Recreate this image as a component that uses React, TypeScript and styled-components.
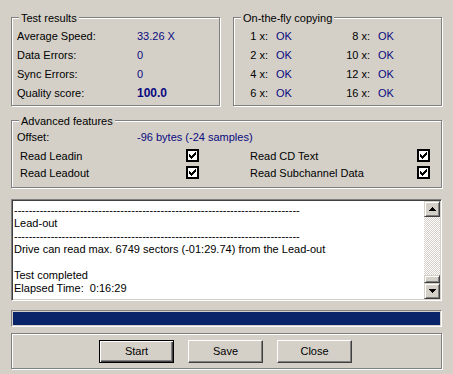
import { Fragment } from 'react';
import styled, { createGlobalStyle, css } from 'styled-components';

const GlobalStyle = createGlobalStyle`
  html, body {
    margin: 0;
    padding: 0;
    background: #d4d0c8;
  }
  body {
    font-family: "Liberation Sans", Arial, sans-serif;
    font-size: 11px;
    color: #000;
  }
`;

const Window = styled.div`
  width: 453px;
  height: 374px;
  box-sizing: border-box;
  padding: 17px 11px 0 11px;
  display: flex;
  flex-direction: column;
  background: #d4d0c8;
`;

const etched = css`
  border: 1px solid #808080;
  box-shadow: 1px 1px 0 #fff, inset 1px 1px 0 #fff;
`;

const TopRow = styled.div`
  display: grid;
  grid-template-columns: 209px 209px;
  column-gap: 13px;
`;

const Group = styled.div<{ $height: number }>`
  position: relative;
  box-sizing: border-box;
  height: ${({ $height }) => $height}px;
  ${etched};
`;

const Legend = styled.span`
  position: absolute;
  top: -6px;
  left: 7px;
  padding: 0 2px;
  line-height: 13px;
  background: #d4d0c8;
`;

const ResultsGrid = styled.div`
  display: grid;
  grid-template-columns: 120px 1fr;
  grid-auto-rows: 19px;
  align-items: center;
  padding: 8px 0 0 5px;
`;

const Value = styled.span<{ $bold?: boolean }>`
  color: #0a0a80;
  font-weight: ${({ $bold }) => ($bold ? 700 : 400)};
  font-size: ${({ $bold }) => ($bold ? '12px' : '11px')};
`;

const CopyGrid = styled.div`
  display: grid;
  grid-template-columns: 34px 68px 34px 1fr;
  grid-auto-rows: 19px;
  align-items: center;
  padding-top: 8px;
`;

const Speed = styled.span`
  text-align: right;
`;

const Ok = styled(Value)`
  padding-left: 8px;
`;

const Advanced = styled(Group)`
  margin-top: 14px;
`;

const OffsetRow = styled.div`
  display: grid;
  grid-template-columns: 120px 1fr;
  align-items: center;
  height: 14px;
  padding: 9px 0 0 5px;
`;

const FeatureGrid = styled.div`
  display: grid;
  grid-template-columns: 166px 13px 51px 167px 13px;
  grid-auto-rows: 13px;
  row-gap: 4px;
  align-items: center;
  margin-top: 5px;
  padding-left: 8px;
`;

const Spacer = styled.span``;

const Check = styled.span`
  box-sizing: border-box;
  width: 13px;
  height: 13px;
  border: 2px solid #000;
  background: #fff;
  display: flex;
  align-items: center;
  justify-content: center;
`;

const CheckMark = () => (
  <svg width="9" height="9" viewBox="0 0 9 9" shapeRendering="crispEdges">
    {[3, 4, 5, 4, 3, 2, 1].map((y, i) => (
      <rect key={i} x={i + 1} y={y} width="1" height="3" fill="#000" />
    ))}
  </svg>
);

const LogBox = styled.div`
  margin-top: 11px;
  height: 102px;
  box-sizing: border-box;
  display: flex;
  padding: 1px;
  border: 1px solid;
  border-color: #808080 #fff #fff #808080;
  box-shadow: inset 1px 1px 0 #404040, inset -1px -1px 0 #d4d0c8;
`;

const LogText = styled.div`
  flex: 1;
  background: #fff;
  overflow: hidden;
  padding: 3px 0 0 1px;
  line-height: 13px;
  white-space: pre;
`;

const ScrollBar = styled.div`
  width: 16px;
  display: flex;
  flex-direction: column;
`;

const raised = css`
  box-sizing: border-box;
  background: #d4d0c8;
  border: 1px solid;
  border-color: #d4d0c8 #404040 #404040 #d4d0c8;
  box-shadow: inset 1px 1px 0 #fff, inset -1px -1px 0 #808080;
`;

const ScrollButton = styled.div`
  ${raised};
  height: 16px;
  display: flex;
  align-items: center;
  justify-content: center;
`;

const Track = styled.div`
  flex: 1;
  display: flex;
  flex-direction: column;
  justify-content: flex-end;
  background: repeating-conic-gradient(#fff 0 25%, #d4d0c8 0 50%) 0 0 / 2px 2px;
`;

const Thumb = styled.div`
  ${raised};
  height: 8px;
`;

const Arrow = ({ down }: { down?: boolean }) => (
  <svg width="7" height="4" viewBox="0 0 7 4" shapeRendering="crispEdges">
    <polygon points={down ? '0,0 7,0 3.5,4' : '3.5,0 7,4 0,4'} fill="#000" />
  </svg>
);

const Progress = styled.div`
  margin-top: 9px;
  height: 17px;
  box-sizing: border-box;
  padding: 1px;
  border: 1px solid;
  border-color: #808080 #fff #fff #808080;
`;

const ProgressFill = styled.div`
  height: 100%;
  background: #0a246a;
`;

const ButtonPanel = styled.div`
  margin-top: 6px;
  height: 36px;
  box-sizing: border-box;
  display: flex;
  align-items: center;
  gap: 14px;
  padding-left: 87px;
  ${etched};
`;

const Button = styled.button<{ $default?: boolean }>`
  width: 75px;
  height: 23px;
  margin: 0;
  padding: 0;
  font-family: "Liberation Sans", Arial, sans-serif;
  font-size: 11px;
  color: #000;
  background: #d4d0c8;
  border: 1px solid;
  ${({ $default }) =>
    $default
      ? css`
          border-color: #000;
          box-shadow: inset 1px 1px 0 #fff, inset -1px -1px 0 #404040, inset -2px -2px 0 #808080;
        `
      : css`
          border-color: #fff #404040 #404040 #fff;
          box-shadow: inset -1px -1px 0 #808080;
        `}
`;

const dashes = '-'.repeat(78);

const logLines = [
  dashes,
  'Lead-out',
  dashes,
  'Drive can read max. 6749 sectors (-01:29.74) from the Lead-out',
  '',
  'Test completed',
  'Elapsed Time:  0:16:29',
];

const speeds: [string, string][] = [
  ['1 x:', '8 x:'],
  ['2 x:', '10 x:'],
  ['4 x:', '12 x:'],
  ['6 x:', '16 x:'],
];

export default function App() {
  return (
    <>
      <GlobalStyle />
      <Window>
        <TopRow>
          <Group $height={89}>
            <Legend>Test results</Legend>
            <ResultsGrid>
              <span>Average Speed:</span>
              <Value>33.26 X</Value>
              <span>Data Errors:</span>
              <Value>0</Value>
              <span>Sync Errors:</span>
              <Value>0</Value>
              <span>Quality score:</span>
              <Value $bold>100.0</Value>
            </ResultsGrid>
          </Group>
          <Group $height={89}>
            <Legend>On-the-fly copying</Legend>
            <CopyGrid>
              {speeds.map(([a, b]) => (
                <Fragment key={a}>
                  <Speed>{a}</Speed>
                  <Ok>OK</Ok>
                  <Speed>{b}</Speed>
                  <Ok>OK</Ok>
                </Fragment>
              ))}
            </CopyGrid>
          </Group>
        </TopRow>

        <Advanced $height={68}>
          <Legend>Advanced features</Legend>
          <OffsetRow>
            <span>Offset:</span>
            <Value>-96 bytes (-24 samples)</Value>
          </OffsetRow>
          <FeatureGrid>
            <span>Read Leadin</span>
            <Check><CheckMark /></Check>
            <Spacer />
            <span>Read CD Text</span>
            <Check><CheckMark /></Check>
            <span>Read Leadout</span>
            <Check><CheckMark /></Check>
            <Spacer />
            <span>Read Subchannel Data</span>
            <Check><CheckMark /></Check>
          </FeatureGrid>
        </Advanced>

        <LogBox>
          <LogText>{logLines.join('\n')}</LogText>
          <ScrollBar>
            <ScrollButton><Arrow /></ScrollButton>
            <Track><Thumb /></Track>
            <ScrollButton><Arrow down /></ScrollButton>
          </ScrollBar>
        </LogBox>

        <Progress>
          <ProgressFill />
        </Progress>

        <ButtonPanel>
          <Button $default>Start</Button>
          <Button>Save</Button>
          <Button>Close</Button>
        </ButtonPanel>
      </Window>
    </>
  );
}
